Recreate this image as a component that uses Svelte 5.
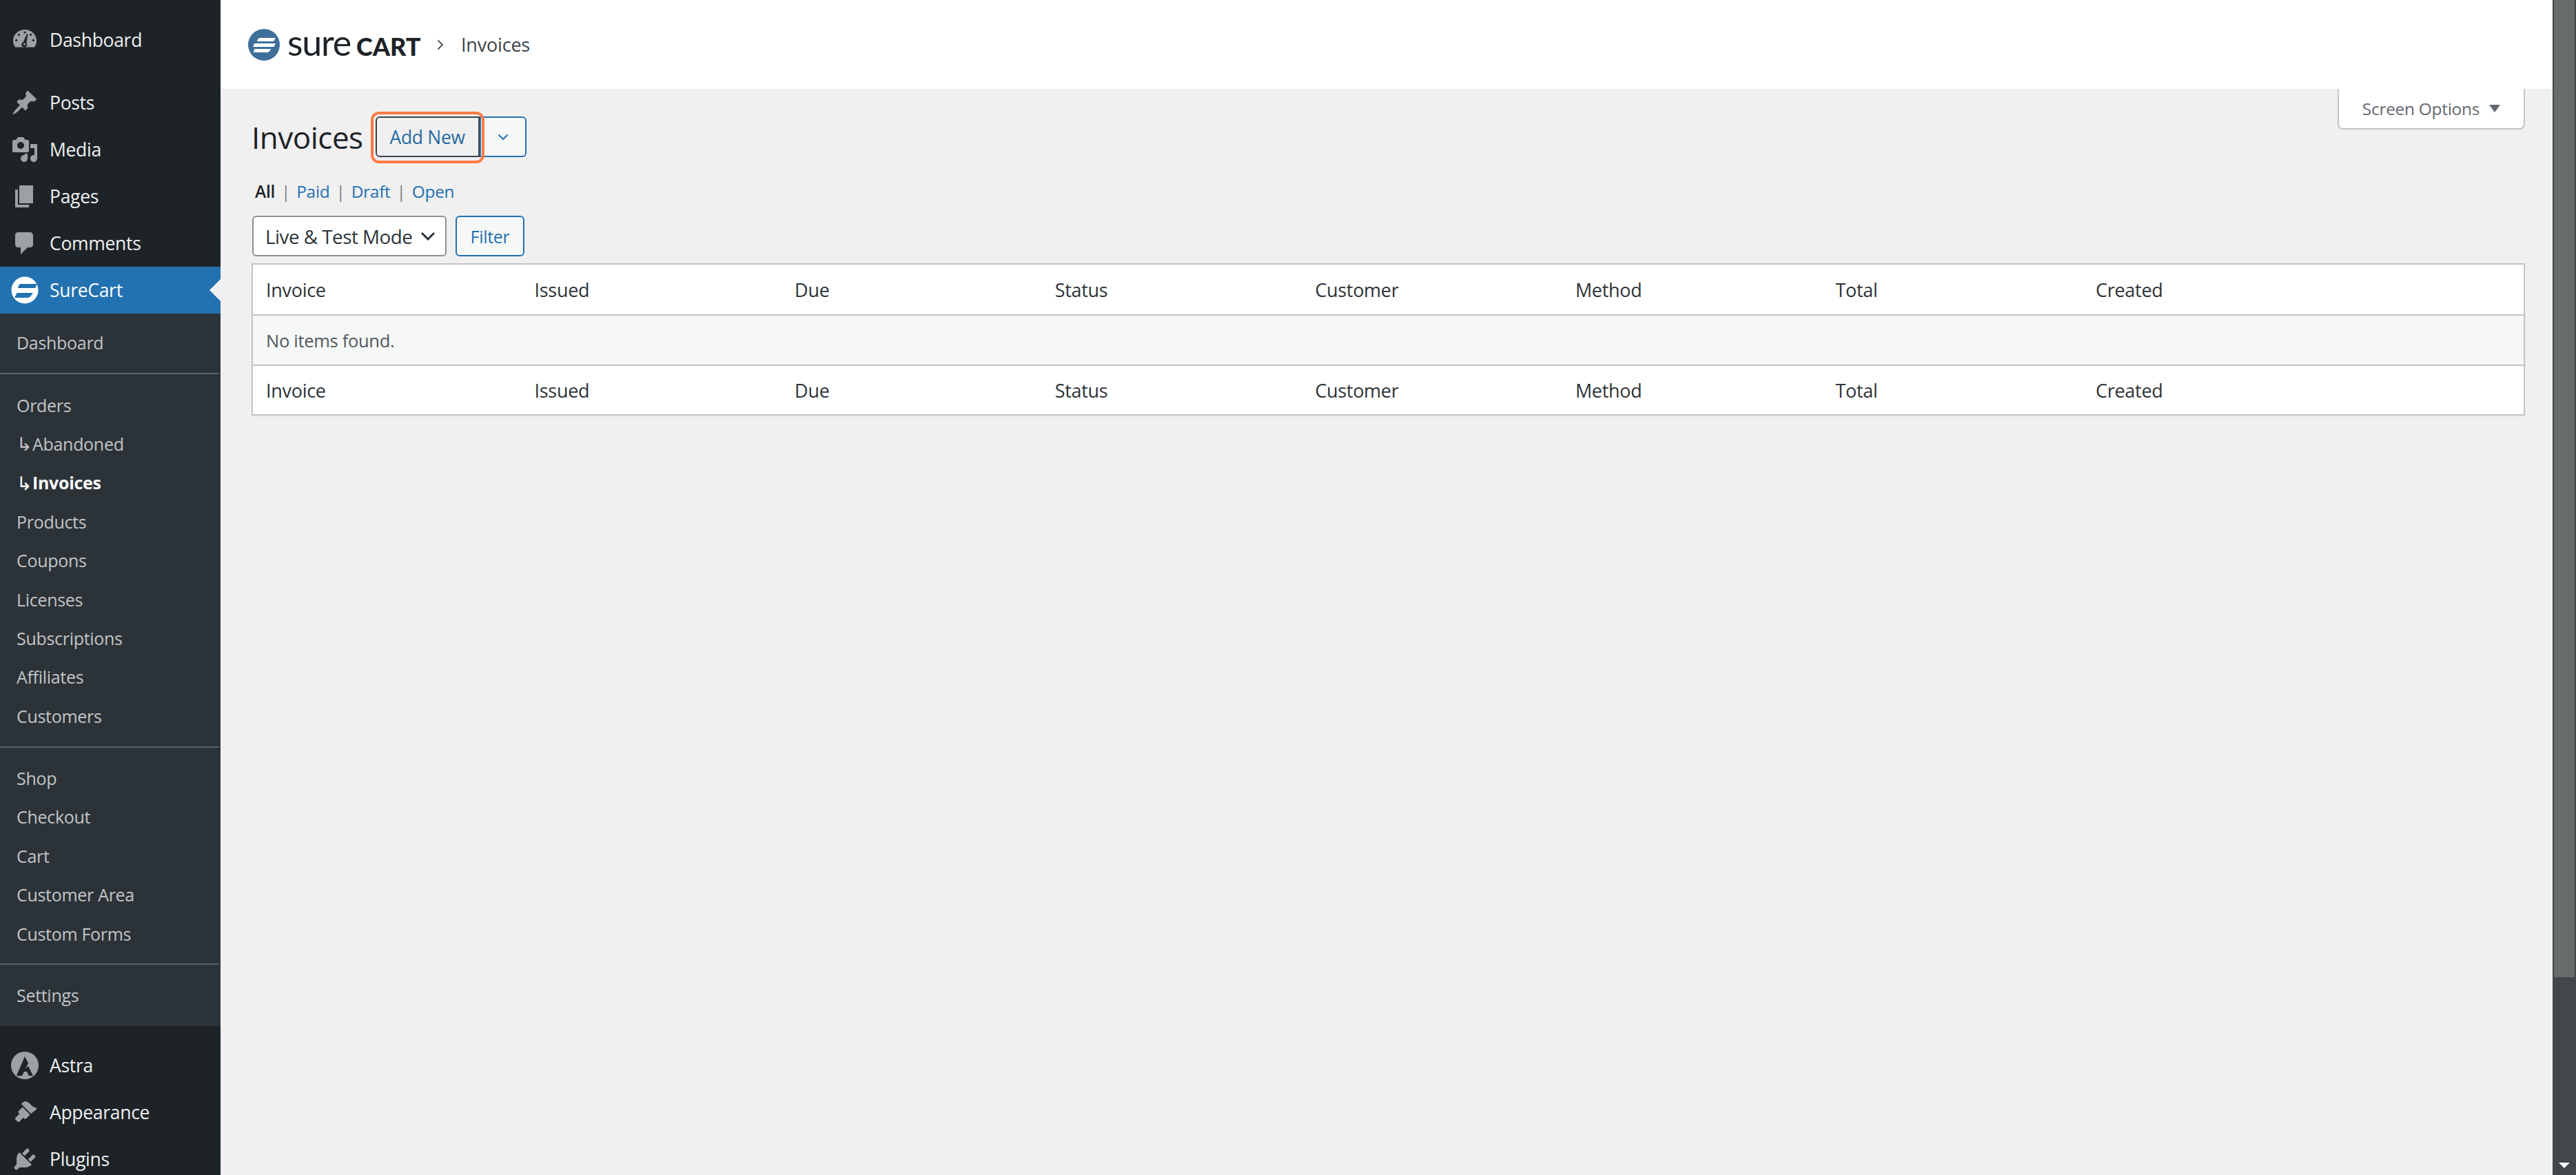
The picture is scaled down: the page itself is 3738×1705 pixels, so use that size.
<script lang="ts">
	const columns = ['Invoice', 'Issued', 'Due', 'Status', 'Customer', 'Method', 'Total', 'Created'];

	const subGroups = [
		[{ label: 'Dashboard' }],
		[
			{ label: 'Orders' },
			{ label: 'Abandoned', child: true },
			{ label: 'Invoices', child: true, current: true },
			{ label: 'Products' },
			{ label: 'Coupons' },
			{ label: 'Licenses' },
			{ label: 'Subscriptions' },
			{ label: 'Affiliates' },
			{ label: 'Customers' }
		],
		[
			{ label: 'Shop' },
			{ label: 'Checkout' },
			{ label: 'Cart' },
			{ label: 'Customer Area' },
			{ label: 'Custom Forms' }
		],
		[{ label: 'Settings' }]
	];

	const views = [
		{ label: 'All', current: true },
		{ label: 'Paid' },
		{ label: 'Draft' },
		{ label: 'Open' }
	];

	// dashicons-style paths, 20 unit box
	const icons = {
		posts:
			'M10.44 3.02l1.82-1.82 6.36 6.35-1.83 1.82c-1.05-.68-2.48-.57-3.41.36l-.75.75c-.92.93-1.04 2.35-.35 3.41l-1.83 1.82-2.41-2.41-2.8 2.79c-.42.42-3.38 2.71-3.8 2.29s1.86-3.39 2.28-3.81l2.79-2.79L4.1 9.36l1.83-1.82c1.05.69 2.48.57 3.4-.36l.75-.75c.93-.92 1.05-2.35.36-3.41z',
		media:
			'M13 11V4c0-.55-.45-1-1-1h-1.67L9 1H5L3.67 3H2c-.55 0-1 .45-1 1v7c0 .55.45 1 1 1h10c.55 0 1-.45 1-1zM7 4.5c1.38 0 2.5 1.12 2.5 2.5S8.38 9.5 7 9.5 4.5 8.38 4.5 7 5.62 4.5 7 4.5zM14 6h5v10.5c0 1.38-1.12 2.5-2.5 2.5S14 17.88 14 16.5s1.12-2.5 2.5-2.5c.17 0 .34.02.5.05V9h-3V6zm-4 8.05V13h2v3.5c0 1.38-1.12 2.5-2.5 2.5S7 17.88 7 16.5 8.12 14 9.5 14c.17 0 .34.02.5.05z',
		pages: 'M6 15V2h10v13H6zm-1 1h8v2H3V5h2v11z',
		comments:
			'M5 2h9c1.1 0 2 .9 2 2v7c0 1.1-.9 2-2 2h-2l-5 5v-5H5c-1.1 0-2-.9-2-2V4c0-1.1.9-2 2-2z',
		appearance:
			'M14.48 11.06L7.41 3.99l1.5-1.5c.5-.56 2.3-.47 3.51.32 1.21.8 1.43 1.28 2.66 2.4 1.22 1.12 2.63 1.47 3.51 1.42l-.55 1.69-2.12 1.61-1.44 1.13zm-.66.66l-2.83 2.83c-.39.39-1.02.39-1.41 0l-.62-.62-2.82 2.83c-.39.39-1.02.39-1.41 0l-1.42-1.41c-.39-.39-.39-1.03 0-1.42l2.83-2.82-.62-.62c-.39-.39-.39-1.02 0-1.41l2.83-2.83z',
		plugins:
			'M13.11 4.36L9.87 7.6 8 5.73l3.24-3.24c.35-.34 1.05-.2 1.56.31.52.52.66 1.21.31 1.56zm-8 1.77l.91-1.12 9.01 9.01-1.19.84c-.71.71-2.63 1.16-3.82 1.16H6.14L4.9 17.26c-.59.59-1.54.59-2.12 0-.59-.58-.59-1.53 0-2.12l1.24-1.24v-3.88c0-1.13.4-3.04 1.09-3.89zm7.26 3.97l3.24-3.24c.34-.35 1.04-.21 1.55.31.52.51.66 1.21.31 1.55l-3.24 3.25z'
	};
</script>

{#snippet menuItem(label: string, path: string)}
	<a class="menu-item" href="#top">
		<span class="menu-icon">
			<svg width="40" height="40" viewBox="0 0 20 20"><path fill="#9ca1a6" d={path} /></svg>
		</span>
		<span>{label}</span>
	</a>
{/snippet}

<div class="wrap" id="top">
	<nav class="sidebar">
		<div class="top-group">
			<a class="menu-item" href="#top">
				<span class="menu-icon">
					<svg width="40" height="40" viewBox="0 0 20 20">
						<path fill="#9ca1a6" d="M3 15.2C2 13.8 1.5 12.2 1.5 10.5 1.5 6 5.3 2.5 10 2.5s8.500 3.500 8.500 8c0 1.700-.5 3.300-1.500 4.700z" />
						<g fill="#1d2327">
							<circle cx="10" cy="4.500" r=".8" /><circle cx="5.700" cy="6.200" r=".8" /><circle cx="14.300" cy="6.200" r=".8" />
							<circle cx="3.800" cy="10.200" r=".8" /><circle cx="16.200" cy="10.200" r=".8" />
							<path d="M11.500 5.500l.7.3-1 6.400a2 2 0 1 1-2.300-.7z" />
						</g>
						<circle cx="9.700" cy="13" r=".8" fill="#9ca1a6" />
					</svg>
				</span>
				<span>Dashboard</span>
			</a>
		</div>
		<div class="top-group second">
			{@render menuItem('Posts', icons.posts)}
			{@render menuItem('Media', icons.media)}
			{@render menuItem('Pages', icons.pages)}
			{@render menuItem('Comments', icons.comments)}
			<a class="menu-item active" href="#top">
				<span class="menu-icon">
					<svg width="40" height="40" viewBox="0 0 40 40">
						<circle cx="20" cy="20" r="19.5" fill="#fff" />
						<path fill="#2271b1" d="M14 11h24l-3 6H10c.6-3 2-6 4-6zM8.500 24H32l-3 4c-1 2-3 3-5 3H5z" />
					</svg>
				</span>
				<span>SureCart</span>
				<i class="notch"></i>
			</a>
		</div>
		<div class="submenu">
			{#each subGroups as group, i}
				{#if i > 0}<hr class="sub-sep" />{/if}
				{#each group as item}
					<a class="sub-item" class:current={item.current} href="#top">
						{#if item.child}<span class="arrow">↳</span>{/if}{item.label}
					</a>
				{/each}
			{/each}
		</div>
		<div class="top-group third">
			<a class="menu-item" href="#top">
				<span class="menu-icon">
					<svg width="40" height="40" viewBox="0 0 40 40">
						<circle cx="20" cy="20" r="20" fill="#9ca1a6" />
						<path fill="#1d2327" d="M20 7l5 10-9 18H8z" />
						<path fill="#1d2327" d="M25 21l7 14h-6l-3-6h-6z" />
					</svg>
				</span>
				<span>Astra</span>
			</a>
			{@render menuItem('Appearance', icons.appearance)}
			{@render menuItem('Plugins', icons.plugins)}
		</div>
	</nav>

	<main class="main">
		<header class="topbar">
			<svg class="logo-mark" width="46" height="46" viewBox="0 0 46 46">
				<circle cx="23" cy="23" r="23" fill="#3e6f99" />
				<g fill="#fff">
					<path d="M17 13h23l-3 5H13c.6-2.500 2-5 4-5z" />
					<path d="M9 21h31l-2.500 5H7z" />
					<path d="M9 29h24c-1 3-3 5-6 5H8z" />
				</g>
			</svg>
			<span class="wordmark"><span class="sure">sure</span><b class="cart">CART</b></span>
			<svg class="crumb-sep" width="10" height="16" viewBox="0 0 10 16">
				<path d="M1.500 1.500 8 8l-6.500 6.500" fill="none" stroke="#50575e" stroke-width="2" />
			</svg>
			<span class="crumb">Invoices</span>
		</header>

		<div class="body">
			<button class="screen-options" type="button">
				Screen Options <i class="tri"></i>
			</button>

			<div class="heading">
				<h1>Invoices</h1>
				<span class="add-wrap">
					<button class="btn add" type="button">Add New</button>
					<span class="ring"></span>
				</span>
				<button class="btn more" type="button" aria-label="More">
					<svg width="16" height="10" viewBox="0 0 16 10">
						<path d="M1.500 1.500 8 8l6.500-6.500" fill="none" stroke="#2271b1" stroke-width="2" />
					</svg>
				</button>
			</div>

			<ul class="views">
				{#each views as view, i}
					{#if i > 0}<li class="bar">|</li>{/if}
					<li class:current={view.current}>{view.label}</li>
				{/each}
			</ul>

			<div class="filters">
				<div class="select">
					<span>Live &amp; Test Mode</span>
					<svg width="22" height="13" viewBox="0 0 22 13">
						<path d="M2 2l9 9 9-9" fill="none" stroke="#2c3338" stroke-width="3" />
					</svg>
				</div>
				<button class="btn filter" type="button">Filter</button>
			</div>

			<div class="table">
				<div class="row head">
					{#each columns as col}<div>{col}</div>{/each}
				</div>
				<div class="row-empty">No items found.</div>
				<div class="row foot">
					{#each columns as col}<div>{col}</div>{/each}
				</div>
			</div>
		</div>
	</main>

	<div class="scrollbar">
		<div class="thumb"></div>
		<svg class="down" width="16" height="8" viewBox="0 0 16 8"><path d="M0 0h16l-8 8z" fill="#fff" /></svg>
	</div>
</div>

<style>
	:global(body) {
		margin: 0;
		background: #f0f0f1;
		overflow: hidden;
	}

	.wrap {
		display: grid;
		grid-template-columns: 320px 1fr 34px;
		height: 1705px;
		overflow: hidden;
		font-family: 'Open Sans', 'Noto Sans', sans-serif;
		color: #3c434a;
	}

	a {
		text-decoration: none;
	}

	/* sidebar */
	.sidebar {
		background: #1d2327;
		height: 1705px;
		overflow: hidden;
	}

	.top-group {
		padding-top: 24px;
	}

	.top-group.second {
		padding-top: 23px;
	}

	.top-group.third {
		padding-top: 23px;
	}

	.menu-item {
		position: relative;
		display: flex;
		align-items: center;
		height: 68px;
		font-size: 26.5px;
		letter-spacing: -0.3px;
		color: #f0f0f1;
	}

	.menu-icon {
		display: flex;
		align-items: center;
		justify-content: center;
		width: 72px;
	}

	.menu-item.active {
		background: #2271b1;
		color: #fff;
	}

	.notch {
		position: absolute;
		right: 0;
		top: 18px;
		border: 16px solid transparent;
		border-right-color: #f0f0f1;
		border-left-width: 0;
	}

	.submenu {
		background: #2c3338;
		padding: 14px 0 17px;
		display: flex;
		flex-direction: column;
	}

	.sub-item {
		display: flex;
		align-items: center;
		height: 56.4px;
		padding-left: 24px;
		font-size: 25px;
		letter-spacing: -0.3px;
		color: #c3c4c7;
		white-space: pre;
	}

	.sub-item.current {
		color: #fff;
		font-weight: 700;
	}

	.arrow {
		display: inline-block;
		width: 23px;
		font-size: 27px;
		font-weight: 400;
	}

	.sub-sep {
		width: 318px;
		margin: 16px 0;
		height: 0;
		border: 0;
		border-top: 2px solid #5b6166;
	}

	.sub-sep:last-of-type {
		margin-top: 15px;
	}

	/* main */
	.main {
		min-width: 0;
	}

	.topbar {
		display: flex;
		align-items: center;
		height: 129px;
		background: #fff;
		padding-left: 40px;
		box-sizing: border-box;
	}

	.logo-mark {
		margin-right: 11px;
	}

	.wordmark {
		display: flex;
		align-items: baseline;
		width: 217px;
		padding-bottom: 8px;
		color: #1d2327;
		font-family: Lato, 'Open Sans', sans-serif;
	}

	.sure {
		font-size: 52px;
		font-weight: 400;
		letter-spacing: -1.2px;
	}

	.cart {
		font-size: 36px;
		font-weight: 900;
		margin-left: 8px;
	}

	.crumb-sep {
		margin-right: 25px;
	}

	.crumb {
		font-size: 27px;
		letter-spacing: -0.2px;
		color: #3c434a;
	}

	.body {
		position: relative;
		padding: 40px 40px 0 45px;
	}

	.screen-options {
		position: absolute;
		top: 0;
		right: 40px;
		width: 272px;
		height: 59px;
		background: #fff;
		border: 2px solid #c3c4c7;
		border-top: 0;
		border-radius: 0 0 8px 8px;
		font: inherit;
		font-size: 24.5px;
		letter-spacing: -0.3px;
		color: #646970;
		display: flex;
		align-items: center;
		justify-content: center;
		gap: 14px;
		padding: 0;
	}

	.tri {
		border: 8px solid transparent;
		border-top: 11px solid #646970;
		border-bottom: 0;
	}

	.heading {
		display: flex;
		align-items: center;
		height: 59px;
	}

	h1 {
		margin: 0 18px 0 0;
		font-size: 44px;
		font-weight: 400;
		letter-spacing: -0.5px;
		color: #1d2327;
	}

	.btn {
		font: inherit;
		font-size: 25px;
		letter-spacing: -0.3px;
		color: #2271b1;
		background: #f6f7f7;
		border: 2px solid #2271b1;
		border-radius: 6px;
		padding: 0;
		box-sizing: border-box;
	}

	.add-wrap {
		position: relative;
		display: block;
		width: 151px;
		height: 59px;
	}

	.add {
		display: block;
		width: 100%;
		height: 100%;
		background: #f0f0f1;
		border-color: #3c434a;
		border-radius: 6px 0 0 6px;
		font-size: 26.5px;
		color: #2a6a9e;
	}

	.ring {
		position: absolute;
		inset: -7px -7px -9px -7px;
		border: 4px solid #ff7a45;
		border-radius: 12px;
		pointer-events: none;
	}

	.more {
		width: 68px;
		height: 59px;
		border-radius: 0 6px 6px 0;
		display: flex;
		align-items: center;
		justify-content: center;
	}

	.views {
		list-style: none;
		display: flex;
		align-items: center;
		height: 40px;
		margin: 29px 0 0 5px;
		padding: 0;
		font-size: 24.5px;
		letter-spacing: -0.3px;
		color: #2271b1;
	}

	.views li {
		white-space: nowrap;
	}

	.views .current {
		color: #1d2327;
		font-weight: 600;
	}

	.views .bar {
		margin: 0 9px;
		color: #787c82;
	}

	.filters {
		display: flex;
		gap: 13px;
		margin-top: 16px;
		margin-left: 1px;
	}

	.select {
		display: flex;
		align-items: center;
		justify-content: space-between;
		width: 282px;
		height: 59px;
		box-sizing: border-box;
		padding: 0 14px 0 17px;
		background: #fff;
		border: 2px solid #8c8f94;
		border-radius: 6px;
		font-size: 27.8px;
		letter-spacing: -0.5px;
		color: #2c3338;
		white-space: nowrap;
	}

	.filter {
		width: 100px;
		height: 59px;
	}

	.table {
		margin-top: 10px;
		background: #fff;
		border: 2px solid #c3c4c7;
		box-shadow: 0 2px 2px rgba(0, 0, 0, 0.04);
		font-size: 27px;
		letter-spacing: -0.3px;
		color: #2c3338;
	}

	.row {
		display: grid;
		grid-template-columns: 389.5px repeat(6, 377.6px) 1fr;
		height: 72px;
		align-items: center;
	}

	.row > div {
		padding-left: 19px;
	}

	.head {
		border-bottom: 2px solid #c3c4c7;
	}

	.row-empty {
		display: flex;
		align-items: center;
		height: 71px;
		padding-left: 19px;
		background: #f6f7f7;
		font-size: 25.5px;
		color: #50575e;
	}

	.foot {
		border-top: 2px solid #c3c4c7;
		height: 70px;
	}

	/* scrollbar */
	.scrollbar {
		position: relative;
		background: #42474a;
		height: 1705px;
	}

	.thumb {
		width: 30px;
		height: 1418px;
		margin-left: 2px;
		background: #686c6a;
	}

	.down {
		position: absolute;
		left: 9px;
		bottom: 10px;
	}
</style>
